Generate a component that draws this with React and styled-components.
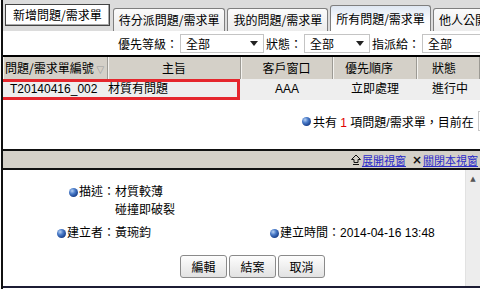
import React from 'react';
import styled, { createGlobalStyle } from 'styled-components';

const GlobalStyle = createGlobalStyle`
  html, body { margin: 0; padding: 0; background: #fff; }
  body {
    font-family: "Liberation Sans", "Noto Sans CJK TC", sans-serif;
    font-size: 12px;
    color: #000;
  }
`;

function Bullet() {
  return <Ball />;
}

function Caret() {
  return (
    <svg width="8" height="5" viewBox="0 0 8 5">
      <path d="M0 0 L8 0 L4 5 Z" fill="#222" />
    </svg>
  );
}

function UpArrow() {
  return (
    <svg width="10" height="11" viewBox="0 0 10 11">
      <path d="M5 1 L9.5 5.5 L7 5.5 L7 8.5 L3 8.5 L3 5.5 L0.5 5.5 Z" fill="none" stroke="#111" strokeWidth="1" />
      <path d="M2 10.5 L8 10.5" stroke="#111" strokeWidth="1" />
    </svg>
  );
}

function Select({ width }) {
  return (
    <SelectBox $w={width}>
      <span>全部</span>
      <Caret />
    </SelectBox>
  );
}

export default function App() {
  return (
    <>
      <GlobalStyle />
      <Frame>
        <TopPane>
          <TabBar>
            <NewButton>新增問題/需求單</NewButton>
            <Tab>待分派問題/需求單</Tab>
            <Tab>我的問題/需求單</Tab>
            <Tab $active>所有問題/需求單</Tab>
            <Tab>他人公開問題/需求單</Tab>
          </TabBar>

          <FilterRow>
            <Label>優先等級：</Label>
            <Select width={84} />
            <Label>狀態：</Label>
            <Select width={66} />
            <Label>指派給：</Label>
            <Select width={85} />
          </FilterRow>

          <Table>
            <HeadRow>
              <HeadCell $pl={2}>問題/需求單編號 <Sort>▽</Sort></HeadCell>
              <HeadCell $center>主旨</HeadCell>
              <HeadCell $center>客戶窗口</HeadCell>
              <HeadCell $pl={12}>優先順序</HeadCell>
              <HeadCell $pl={15}>狀態</HeadCell>
            </HeadRow>
            <DataRow>
              <Cell $pl={7}>T20140416_002</Cell>
              <Cell $pl={0}>材質有問題</Cell>
              <Cell $center>AAA</Cell>
              <Cell $pl={18}>立即處理</Cell>
              <Cell $pl={15}>進行中</Cell>
              <Highlight />
            </DataRow>
          </Table>

          <Summary>
            <Bullet />
            <span>共有 <Count>1</Count> 項問題/需求單，目前在</span>
            <PageBox />
          </Summary>
        </TopPane>

        <ViewBar>
          <UpArrow />
          <LinkText>展開視窗</LinkText>
          <Glyph>×</Glyph>
          <LinkText>關閉本視窗</LinkText>
        </ViewBar>

        <BottomPane>
          <Detail>
            <DetailGrid>
              <FieldLabel $right>
                <Bullet />描述：
              </FieldLabel>
              <FieldValue $span>
                材質較薄
                <br />
                碰撞即破裂
              </FieldValue>
              <FieldLabel $right $top={5}>
                <Bullet />建立者：
              </FieldLabel>
              <FieldValue $top={5}>黃琬鈞</FieldValue>
              <FieldLabel $top={5}>
                <Bullet />建立時間：2014-04-16 13:48
              </FieldLabel>
            </DetailGrid>
            <ButtonRow>
              <Button>編輯</Button>
              <Button>結案</Button>
              <Button>取消</Button>
            </ButtonRow>
          </Detail>
          <Scrollbar>
            <ScrollArrow>▲</ScrollArrow>
          </Scrollbar>
        </BottomPane>
      </Frame>
    </>
  );
}

const Frame = styled.div`
  width: 477px;
  height: 289px;
  margin-left: 1px;
  border-left: 2px solid #111;
  overflow: hidden;
  display: flex;
  flex-direction: column;
  background: #fff;
`;

const TopPane = styled.div`
  height: 149px;
  flex-shrink: 0;
  display: flex;
  flex-direction: column;
`;

const TabBar = styled.div`
  height: 31px;
  flex-shrink: 0;
  background: #dcdcdc;
  display: flex;
  align-items: flex-end;
  gap: 2px;
  padding-left: 2px;
  white-space: nowrap;
`;

const NewButton = styled.div`
  align-self: flex-start;
  margin-top: 4px;
  margin-right: 1px;
  height: 20px;
  line-height: 20px;
  padding: 0 7px;
  flex-shrink: 0;
  background: #fff;
  border: 1px solid #444;
  box-shadow: inset -1px -1px 0 #aaa;
  font-family: "Noto Sans CJK TC", sans-serif;
`;

const Tab = styled.div`
  height: ${p => (p.$active ? 25 : 22)}px;
  line-height: ${p => (p.$active ? 25 : 22)}px;
  padding: 0 5px;
  flex-shrink: 0;
  border: 1px solid #7f7f7f;
  border-bottom: none;
  border-radius: 3px 3px 0 0;
  background: ${p =>
    p.$active
      ? 'linear-gradient(#dfe7f2, #fbfcfe 60%, #ffffff)'
      : 'linear-gradient(#fbfbfb, #ececec)'};
  font-family: "Noto Sans CJK TC", sans-serif;
`;

const FilterRow = styled.div`
  height: 24px;
  flex-shrink: 0;
  display: flex;
  align-items: center;
  padding-left: 113px;
  white-space: nowrap;
`;

const Label = styled.span`
  flex-shrink: 0;
  margin-right: 2px;
  margin-left: 2px;
  font-family: "Noto Sans CJK TC", sans-serif;
`;

const SelectBox = styled.div`
  width: ${p => p.$w}px;
  height: 19px;
  flex-shrink: 0;
  box-sizing: border-box;
  border: 1px solid #c4c4c4;
  background: #fff;
  display: flex;
  align-items: center;
  justify-content: space-between;
  padding: 0 5px 0 5px;
  font-family: "Noto Sans CJK TC", sans-serif;
`;

const Table = styled.div`
  border-top: 2px solid #000;
`;

const columns = '105px 133px 92px 84px 1fr';

const HeadRow = styled.div`
  display: grid;
  grid-template-columns: ${columns};
  height: 22px;
  background: #d4d0c8;
`;

const HeadCell = styled.div`
  line-height: 22px;
  padding-left: ${p => (p.$center ? 0 : p.$pl)}px;
  text-align: ${p => (p.$center ? 'center' : 'left')};
  border-right: 1px solid #9c9a94;
  box-shadow: inset 1px 0 0 #f4f3f0;
  white-space: nowrap;
  overflow: hidden;
  font-family: "Noto Sans CJK TC", sans-serif;
`;

const Sort = styled.span`
  color: #9a9a9a;
  font-size: 10px;
  font-family: "DejaVu Sans", sans-serif;
`;

const DataRow = styled.div`
  position: relative;
  display: grid;
  grid-template-columns: ${columns};
  height: 21px;
  background: #eeeeee;
`;

const Cell = styled.div`
  line-height: 21px;
  padding-left: ${p => (p.$center ? 0 : p.$pl)}px;
  text-align: ${p => (p.$center ? 'center' : 'left')};
  white-space: nowrap;
  overflow: hidden;
`;

const Highlight = styled.div`
  position: absolute;
  left: -3px;
  top: 0;
  width: 240px;
  height: 21px;
  box-sizing: border-box;
  border: 3px solid #e5262d;
`;

const Summary = styled.div`
  margin-top: 12px;
  height: 18px;
  display: flex;
  align-items: center;
  padding-left: 299px;
  white-space: nowrap;
  gap: 1px;
`;

const Count = styled.span`
  color: #e00000;
`;

const PageBox = styled.div`
  flex-shrink: 0;
  margin-left: 3px;
  width: 24px;
  height: 18px;
  border: 1px solid #c8c8c8;
`;

const Ball = styled.span`
  display: inline-block;
  flex-shrink: 0;
  width: 9px;
  height: 9px;
  margin-right: 1px;
  border-radius: 50%;
  vertical-align: -1px;
  background: radial-gradient(circle at 35% 32%, #b8d2f4 0%, #4a7bc8 35%, #173e8a 75%, #0b2458 100%);
`;

const ViewBar = styled.div`
  height: 17px;
  flex-shrink: 0;
  border-top: 2px solid #111;
  border-bottom: 2px solid #111;
  background: #d4d0c8;
  display: flex;
  align-items: center;
  justify-content: flex-end;
  gap: 1px;
  padding-right: 2px;
  white-space: nowrap;
  font-family: "Noto Sans CJK TC", sans-serif;
  font-size: 11px;
`;

const Glyph = styled.span`
  font-family: "DejaVu Sans", sans-serif;
  font-size: 12px;
  font-weight: bold;
  margin-left: 5px;
  color: #111;
`;

const LinkText = styled.span`
  color: #2b2bc8;
  text-decoration: underline;
`;

const BottomPane = styled.div`
  height: 116px;
  flex-shrink: 0;
  display: flex;
  border-bottom: 2px solid #1c1c34;
`;

const Detail = styled.div`
  flex: 1;
  padding-top: 13px;
  display: flex;
  flex-direction: column;
`;

const DetailGrid = styled.div`
  display: grid;
  grid-template-columns: 112px 155px 1fr;
  line-height: 18px;
  white-space: nowrap;
`;

const FieldLabel = styled.div`
  margin-top: ${p => p.$top || 0}px;
  text-align: ${p => (p.$right ? 'right' : 'left')};
`;

const FieldValue = styled.div`
  margin-top: ${p => p.$top || 0}px;
  grid-column: ${p => (p.$span ? '2 / -1' : 'auto')};
`;

const ButtonRow = styled.div`
  margin-top: 13px;
  padding-left: 177px;
  display: flex;
  gap: 2px;
`;

const Button = styled.button`
  width: 47px;
  height: 23px;
  padding: 0;
  border: 1px solid #8a8a8a;
  border-radius: 3px;
  background: linear-gradient(#fdfdfd, #e2e2e2);
  font-family: "Noto Sans CJK TC", sans-serif;
  font-size: 12px;
  color: #000;
`;

const Scrollbar = styled.div`
  width: 14px;
  flex-shrink: 0;
  background: #ededed;
  border-left: 1px solid #e2e2e2;
  display: flex;
  justify-content: center;
`;

const ScrollArrow = styled.span`
  margin-top: 5px;
  font-size: 7px;
  line-height: 8px;
  color: #555;
  font-family: "DejaVu Sans", sans-serif;
`;
